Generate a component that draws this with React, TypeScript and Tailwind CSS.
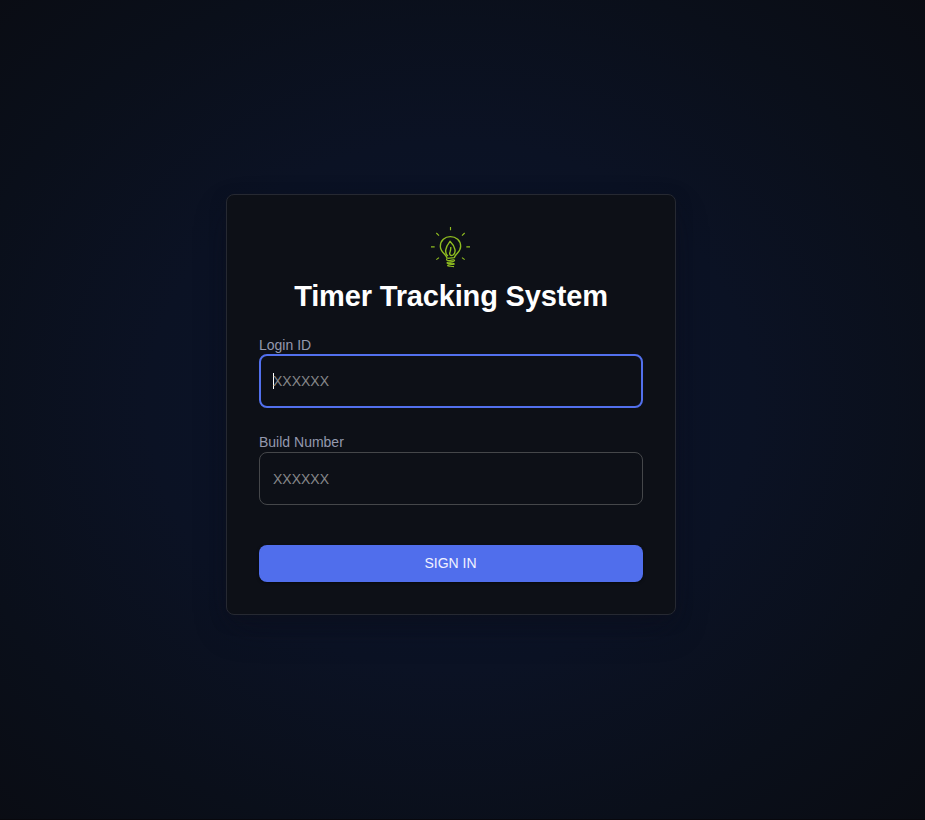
function BulbLogo() {
  return (
    <svg
      viewBox="18 15 120 120"
      className="block size-10 overflow-visible"
      fill="none"
      stroke="#8fbd20"
      strokeWidth="4.2"
      strokeLinecap="butt"
      strokeLinejoin="round"
    >
      <path
        strokeWidth="3.4"
        d="M76.5 15V25M18 74.5H29M124 74.5H135M34 33L42 41M119 33L111 41M34 113L42 107M119 113L111 107"
      />
      <path d="M66 108C64 96 46 92 46 73C46 55 60 44 76 44C93 44 107 55 107 73C107 91 91 95 88 107L67 109" />
      <path d="M69 102C57 93 61 76 75 58C91 74 95 92 84 99C77 103 72 98 75 90C77 84 78 80 77 75" />
      <path
        strokeWidth="3.4"
        d="M66 109C62 116 68 116 76 115C84 113 91 113 88 117C85 121 66 118 66 123C66 127 88 121 88 126C88 129 70 126 68 130C67 133 79 132 87 134"
      />
    </svg>
  );
}

export default function App() {
  return (
    <main className="flex h-[820px] w-full flex-col items-center border-b border-[#08080d] bg-[radial-gradient(ellipse_farthest-corner_at_451px_405px,#0b142b_0%,#0b1224_45%,#0a0f1a_75%,#0a0c13_100%)] pt-[194px] pr-[23px] font-['Liberation_Sans',Arial,sans-serif]">
      <form className="flex h-[421px] w-[450px] flex-col rounded-lg border border-[#262932] bg-[#0d1017] p-8 shadow-[0_5px_15px_rgba(13,15,28,0.4),0_15px_35px_-5px_rgba(13,15,28,0.4)]">
        <div className="flex flex-col items-center">
          <BulbLogo />
          <h1 className="mt-3 text-[29px] leading-[34px] font-bold tracking-[-0.16px] whitespace-nowrap text-white">
            Timer Tracking System
          </h1>
        </div>
        <label className="mt-6 flex h-[17px] items-center text-[14px] leading-[17px] text-[#9499ae]">
          Login ID
        </label>
        <div className="flex h-[54px] w-full shrink-0 items-center rounded-lg border-2 border-[#5270ed] px-3 text-[14px] text-[#86878a]">
          <span className="-mr-px h-4 w-px bg-white" />
          XXXXXX
        </div>
        <label className="mt-[26px] mb-px flex h-[17px] shrink-0 items-center text-[14px] leading-[17px] text-[#9499ae]">
          Build Number
        </label>
        <div className="flex h-[53px] w-full shrink-0 items-center rounded-lg border border-[#45474a] px-[13px] pt-px text-[14px] text-[#86878a]">
          XXXXXX
        </div>
        <button
          type="button"
          className="mt-10 h-[37px] w-full shrink-0 rounded-lg bg-[#506eec] pr-px text-[14px] text-[#f0f2ff] shadow-[0_1px_3px_rgba(0,0,0,0.5)]"
        >
          SIGN IN
        </button>
      </form>
    </main>
  );
}
